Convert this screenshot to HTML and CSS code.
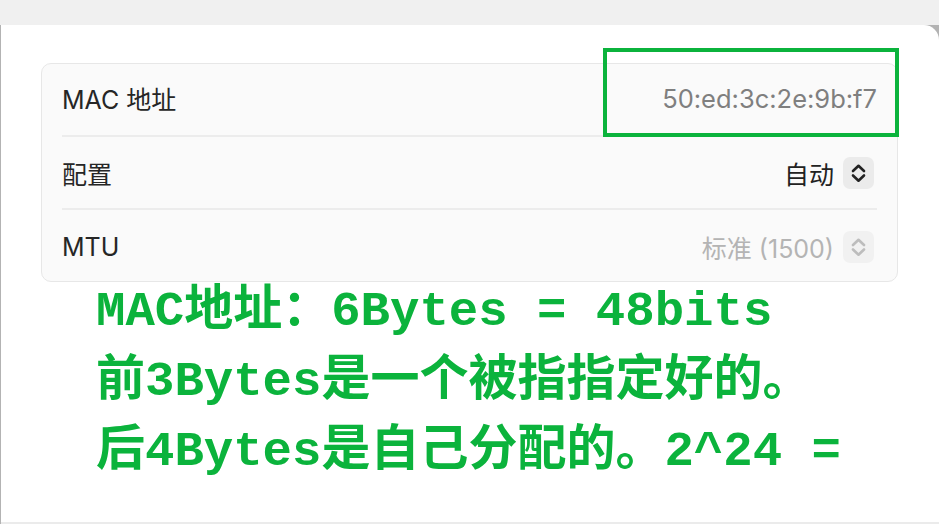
FILE: index.html
```html
<!DOCTYPE html>
<html lang="zh-CN">
<head>
<meta charset="utf-8">
<title>MAC 地址</title>
<link rel="stylesheet" href="styles.css">
</head>
<body>
<div class="topbar"></div>
<div class="frame">
  <div class="window">
    <div class="card">
      <div class="row">
        <span class="label">MAC 地址</span>
        <span class="value mac">50:ed:3c:2e:9b:f7</span>
      </div>
      <div class="row">
        <span class="label">配置</span>
        <span class="control">
          <span class="value">自动</span>
          <span class="stepper">
            <svg width="31" height="32" viewBox="0 0 31 32"><path d="M10 14 L15.5 8.8 L21 14 M10 18.5 L15.5 23.7 L21 18.5" fill="none" stroke="#222" stroke-width="2.6" stroke-linecap="round" stroke-linejoin="round"/></svg>
          </span>
        </span>
      </div>
      <div class="row last">
        <span class="label">MTU</span>
        <span class="control">
          <span class="value dim">标准 (1500)</span>
          <span class="stepper disabled">
            <svg width="31" height="32" viewBox="0 0 31 32"><path d="M10 14 L15.5 8.8 L21 14 M10 18.5 L15.5 23.7 L21 18.5" fill="none" stroke="#bdbdbd" stroke-width="2.6" stroke-linecap="round" stroke-linejoin="round"/></svg>
          </span>
        </span>
      </div>
      <div class="highlight"></div>
    </div>
    <div class="notes">
      <div class="line">MAC地址：6Bytes = 48bits</div>
      <div class="line">前3Bytes是一个被指指定好的。</div>
      <div class="line">后4Bytes是自己分配的。2^24 =</div>
    </div>
  </div>
</div>
</body>
</html>
```

FILE: styles.css
```css
* { box-sizing: border-box; }
html, body { margin: 0; padding: 0; }
body {
  background: #f0f0f0;
  width: 939px;
  height: 524px;
  overflow: hidden;
  font-family: "Inter", "Noto Sans CJK SC", sans-serif;
}
.topbar { height: 25px; background: #f0f0f0; }
.frame {
  height: 499px;
  background: #b3b3b3;
}
.window {
  margin-left: 1px;
  height: 499px;
  background: #ffffff;
  border-top-right-radius: 15px;
  border-bottom: 2px solid #ebebeb;
  padding: 38px 41px 0 40px;
}
.card {
  position: relative;
  background: #fafafa;
  border: 1px solid #e7e7e7;
  border-radius: 10px;
}
.row {
  margin: 0 20px;
  height: 73px;
  border-bottom: 2px solid #ececec;
  display: flex;
  align-items: center;
  justify-content: space-between;
  font-size: 25px;
  color: #242424;
}
.row:first-child { padding-bottom: 3px; }
.row.last { border-bottom: none; height: 71px; padding-top: 2px; }
.label { color: #262626; }
.value { color: #222; }
.value.mac { color: #7f7f7f; font-size: 25.5px; }
.value.dim { color: #b4b4b4; }
.control { display: flex; align-items: center; gap: 9px; }
.stepper {
  width: 31px;
  height: 32px;
  border-radius: 7px;
  background: #ebebeb;
  display: flex;
  margin-right: 3px;
}
.stepper.disabled { background: #f1f1f1; }
.highlight {
  position: absolute;
  left: 561px;
  top: -16px;
  width: 296px;
  height: 89px;
  border: 4px solid #0bb33c;
}
.notes {
  margin-top: -5px;
  padding-left: 55px;
  font-family: "Liberation Mono", "Noto Sans CJK SC", monospace;
  font-weight: bold;
  font-size: 49px;
  line-height: 70px;
  color: #0bb33c;
}
.line { white-space: pre; }
```
